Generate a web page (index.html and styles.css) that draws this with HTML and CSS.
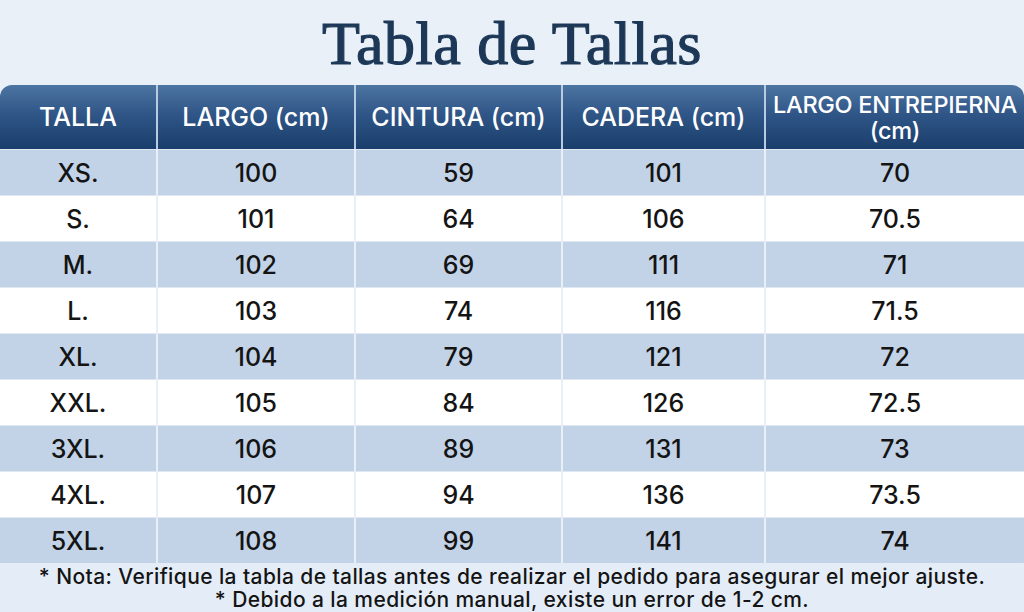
FILE: index.html
```html
<!DOCTYPE html>
<html lang="es">
<head>
<meta charset="utf-8">
<title>Tabla de Tallas</title>
<link rel="stylesheet" href="styles.css">
</head>
<body>
<div class="page">
  <h1 class="title">Tabla de Tallas</h1>
  <table class="sizes">
    <thead>
      <tr>
        <th class="c1">TALLA</th>
        <th class="c2">LARGO (cm)</th>
        <th class="c3">CINTURA (cm)</th>
        <th class="c4">CADERA (cm)</th>
        <th class="c5">LARGO ENTREPIERNA<br>(cm)</th>
      </tr>
    </thead>
    <tbody>
      <tr><td>XS.</td><td>100</td><td>59</td><td>101</td><td>70</td></tr>
      <tr><td>S.</td><td>101</td><td>64</td><td>106</td><td>70.5</td></tr>
      <tr><td>M.</td><td>102</td><td>69</td><td>111</td><td>71</td></tr>
      <tr><td>L.</td><td>103</td><td>74</td><td>116</td><td>71.5</td></tr>
      <tr><td>XL.</td><td>104</td><td>79</td><td>121</td><td>72</td></tr>
      <tr><td>XXL.</td><td>105</td><td>84</td><td>126</td><td>72.5</td></tr>
      <tr><td>3XL.</td><td>106</td><td>89</td><td>131</td><td>73</td></tr>
      <tr><td>4XL.</td><td>107</td><td>94</td><td>136</td><td>73.5</td></tr>
      <tr><td>5XL.</td><td>108</td><td>99</td><td>141</td><td>74</td></tr>
    </tbody>
  </table>
  <div class="notes">
    <p>* Nota: Verifique la tabla de tallas antes de realizar el pedido para asegurar el mejor ajuste.</p>
    <p>* Debido a la medición manual, existe un error de 1-2 cm.</p>
  </div>
</div>
</body>
</html>
```
FILE: styles.css
```css
html, body {
  margin: 0;
  padding: 0;
}
body {
  width: 1024px;
  height: 612px;
  overflow: hidden;
  background: linear-gradient(180deg, #e9f0f8 0%, #e4edf7 100%);
  font-family: Inter, "Open Sans", sans-serif;
  color: #141414;
}
.page {
  display: flex;
  flex-direction: column;
  height: 612px;
}
.title {
  margin: 0;
  height: 85px;
  box-sizing: border-box;
  padding-top: 11px;
  text-align: center;
  font-family: "Liberation Serif", "DejaVu Serif", serif;
  font-weight: normal;
  font-size: 62px;
  line-height: 64px;
  color: #1d3857;
  -webkit-text-stroke: 1.2px #1d3857;
  letter-spacing: 0.5px;
}
.sizes {
  width: 1024px;
  border-collapse: separate;
  border-spacing: 0;
  table-layout: fixed;
}
.sizes th {
  height: 64px;
  padding: 0;
  box-sizing: border-box;
  background: linear-gradient(180deg, #4d75a2 0%, #2f5687 45%, #1a3e6c 100%);
  color: #ffffff;
  font-weight: 500;
  font-size: 25px;
  line-height: 26px;
  border-left: 2px solid #b9cbe0;
  text-align: center;
  vertical-align: middle;
}
.sizes th.c1 { width: 156px; border-left: none; border-top-left-radius: 12px; }
.sizes th.c2 { width: 198px; }
.sizes th.c3 { width: 207px; }
.sizes th.c4 { width: 203px; }
.sizes th.c5 {
  border-top-right-radius: 12px;
  padding-top: 2px;
  font-size: 23.5px;
  letter-spacing: -0.3px;
  line-height: 26px;
}
.sizes td {
  height: 46px;
  padding: 0;
  box-sizing: border-box;
  text-align: center;
  vertical-align: middle;
  font-size: 25px;
  font-weight: 500;
  line-height: 30px;
  border-left: 2px solid #e9eff7;
  border-top: 1px solid #dfe7f1;
}
.sizes td:first-child { border-left: none; }
.sizes tbody tr:nth-child(odd) td { background: #c3d3e7; }
.sizes tbody tr:nth-child(even) td { background: #ffffff; }
.notes {
  flex: 1;
  padding-top: 2px;
  text-align: center;
  font-size: 21px;
  font-weight: 500;
  letter-spacing: 0.4px;
  color: #141414;
}
.notes p {
  margin: 0;
  line-height: 23px;
}
```
